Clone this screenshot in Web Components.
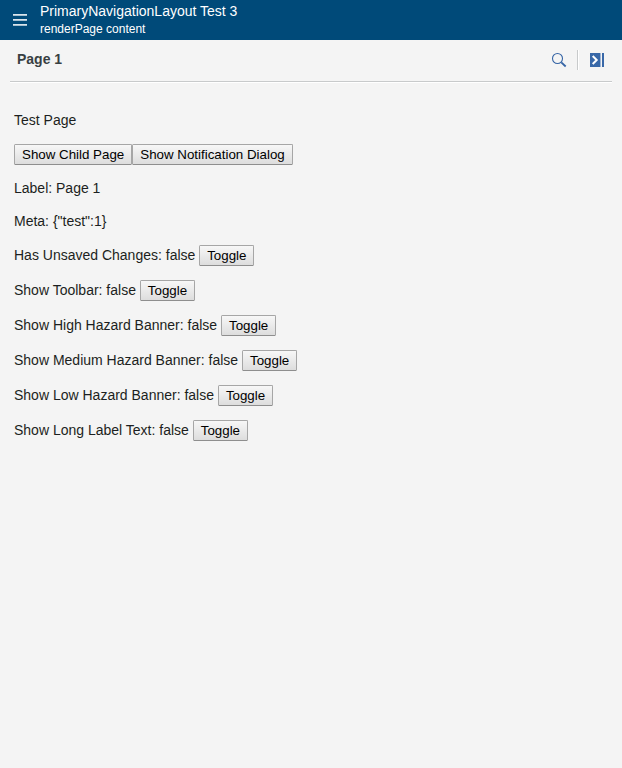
<!DOCTYPE html>
<html lang="en">
<head>
<meta charset="utf-8">
<title>PrimaryNavigationLayout Test 3</title>
<style>
html,body{height:100%}
body{margin:0;background:#f4f4f4;color:#1c1f21;font:14px/19px "Liberation Sans",Arial,sans-serif}
</style>
</head>
<body>
<app-layout>
  <app-header slot="header"><span slot="title">PrimaryNavigationLayout Test 3</span><span slot="subtitle">renderPage content</span></app-header>
  <page-header slot="page-header">Page 1</page-header>
  <content-row>Test Page</content-row>
  <content-row><push-button>Show Child Page</push-button><push-button>Show Notification Dialog</push-button></content-row>
  <content-row>Label: Page 1</content-row>
  <content-row>Meta: {"test":1}</content-row>
  <toggle-row label="Has Unsaved Changes"></toggle-row>
  <toggle-row label="Show Toolbar"></toggle-row>
  <toggle-row label="Show High Hazard Banner"></toggle-row>
  <toggle-row label="Show Medium Hazard Banner"></toggle-row>
  <toggle-row label="Show Low Hazard Banner"></toggle-row>
  <toggle-row label="Show Long Label Text"></toggle-row>
</app-layout>
<script>
function define(name, html, setup) {
  customElements.define(name, class extends HTMLElement {
    constructor() {
      super();
      this.attachShadow({mode: 'open'}).innerHTML = html;
    }
    connectedCallback() { if (setup) setup(this, this.shadowRoot); }
  });
}

define('app-layout', `<style>
:host{display:flex;flex-direction:column;min-height:100%}
main{display:flex;flex-direction:column;gap:14px;padding:28px 14px 14px}
</style><slot name="header"></slot><slot name="page-header"></slot><main><slot></slot></main>`);

define('app-header', `<style>
:host{display:flex;height:40px;background:#004a79;color:#fff}
button{width:40px;height:40px;padding:0;border:0;background:none;display:grid;place-items:center}
svg{display:block}
.text{display:flex;flex-direction:column;padding-top:1px}
.title{font-size:14px;line-height:20px}
.sub{font-size:12px;line-height:16px}
</style><button aria-label="Menu"><svg width="14" height="12" shape-rendering="crispEdges"><path fill="#d9e4eb" d="M0 0h14v1H0zM0 5h14v1H0zM0 10h14v1H0z"/><path fill="#a6c0d0" d="M0 1h14v1H0zM0 6h14v1H0zM0 11h14v1H0z"/></svg></button>
<div class="text"><div class="title"><slot name="title"></slot></div><div class="sub"><slot name="subtitle"></slot></div></div>`);

define('page-header', `<style>
:host{display:flex;box-sizing:border-box;height:43px;margin:0 10px;padding:0 0 2px 7px;align-items:center;border-bottom:1px solid #fff;box-shadow:inset 0 -1px #c8cacb;color:#383f42}
h1{flex:1;margin:0;padding-bottom:2px;font-size:14px;line-height:18px}
button{height:30px;padding:0;border:0;background:none;display:grid;place-items:center}
.search{width:36px}.panel{width:34px;padding-left:4px}
svg{display:block}
.rule{width:1px;height:20px;background:#c8cacb;box-shadow:1px 0 #fff}
</style><h1><slot></slot></h1>
<button class="search" aria-label="Search"><svg width="16" height="16" fill="none" stroke="#3564a5"><circle cx="6.5" cy="6.5" r="5" stroke-width="1.1"/><path stroke-width="1.8" d="M10.3 10.3l4.4 4.2"/></svg></button>
<div class="rule"></div>
<button class="panel" aria-label="Toggle panel"><svg width="14" height="14"><path fill="#3868a8" d="M0 0h10v14H0zM12 0h2v14h-2z"/><path fill="#a0b6d5" d="M10 0h1v14h-1z"/><path fill="none" stroke="#fff" stroke-width="2" d="M2.7 3l4 4-4 4"/></svg></button>`);

define('push-button', `<style>
:host{display:inline-flex}
button{box-sizing:border-box;height:21px;margin:0;padding:0 7px;border:1px solid #a6a6a6;border-bottom-color:#8e8e8e;border-radius:1.5px;background:linear-gradient(#f7f7f7,#ddd);color:#000;font:13.333px/19px "Liberation Sans",Arial,sans-serif;white-space:nowrap}
</style><button><slot></slot></button>`);

define('content-row', `<style>:host{display:flex;align-items:center}</style><slot></slot>`);

define('toggle-row', `<style>
:host{display:flex;align-items:center;gap:3.89px;height:21px}
span{white-space:nowrap;line-height:19px}
</style><span></span><push-button>Toggle</push-button>`, (el, root) => {
  let on = false;
  const render = () => { root.querySelector('span').textContent = el.getAttribute('label') + ': ' + on; };
  root.querySelector('push-button').addEventListener('click', () => { on = !on; render(); });
  render();
});
</script>
</body>
</html>
